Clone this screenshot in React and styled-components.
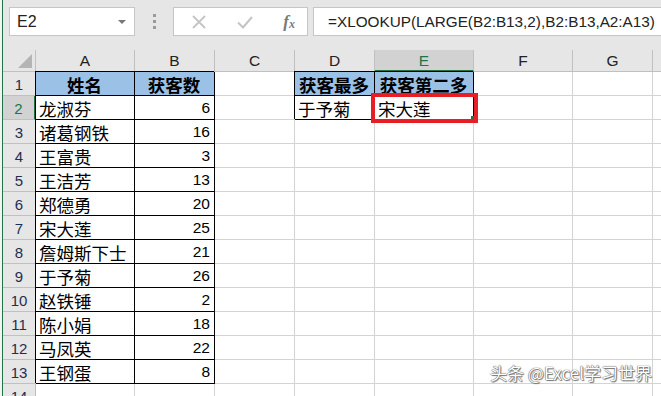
import React from 'react'
import styled, { createGlobalStyle } from 'styled-components'

const GlobalStyle = createGlobalStyle`
  html, body {
    margin: 0;
    padding: 0;
    background: #f3f3f3;
  }
  body {
    font-family: 'Liberation Sans', 'Noto Sans CJK SC', sans-serif;
  }
`

const GREEN = '#217346'
const CJK = "'Noto Sans CJK SC', 'Liberation Sans', sans-serif"

const columns = ['A', 'B', 'C', 'D', 'E', 'F', 'G', 'H']
const widths = [99, 80, 80, 80, 99, 99, 80, 100]

const people = [
  ['龙淑芬', 6],
  ['诸葛钢铁', 16],
  ['王富贵', 3],
  ['王洁芳', 13],
  ['郑德勇', 20],
  ['宋大莲', 25],
  ['詹姆斯下士', 21],
  ['于予菊', 26],
  ['赵铁锤', 2],
  ['陈小娟', 18],
  ['马凤英', 22],
  ['王钢蛋', 8],
]

function buildRows() {
  const rows = []
  rows.push([
    { text: '姓名', head: true },
    { text: '获客数', head: true },
    {},
    { text: '获客最多', head: true },
    { text: '获客第二多', head: true },
    {}, {}, {},
  ])
  people.forEach(([name, n], i) => {
    rows.push([
      { text: name, boxed: true },
      { text: n, boxed: true, num: true },
      {},
      i === 0 ? { text: '于予菊', boxed: true } : {},
      i === 0 ? { text: '宋大莲', boxed: true } : {},
      {}, {}, {},
    ])
  })
  rows.push(columns.map(() => ({})))
  return rows
}

export default function App() {
  const rows = buildRows()
  return (
    <>
      <GlobalStyle />
      <Window>
        <FormulaBar>
          <NameBox>
            <span>E2</span>
            <DropArrow />
          </NameBox>
          <Grip>
            <i />
            <i />
            <i />
          </Grip>
          <FxButtons>
            <svg width='16' height='16' viewBox='0 0 16 16'>
              <path d='M2 2 L14 14 M14 2 L2 14' stroke='#c4c4c4' strokeWidth='1.8' fill='none' />
            </svg>
            <svg width='18' height='16' viewBox='0 0 18 16'>
              <path d='M2 8.5 L7 13.5 L16 3' stroke='#c4c4c4' strokeWidth='2' fill='none' />
            </svg>
            <FxLabel>
              f<sub>x</sub>
            </FxLabel>
          </FxButtons>
          <FormulaInput>=XLOOKUP(LARGE(B2:B13,2),B2:B13,A2:A13)</FormulaInput>
        </FormulaBar>

        <Sheet>
          <Corner>
            <svg width='14' height='14' viewBox='0 0 14 14'>
              <path d='M14 0 L14 14 L0 14 Z' fill='#b4b4b4' />
            </svg>
          </Corner>
          {columns.map((c) => (
            <ColHead key={c} $active={c === 'E'}>
              {c}
            </ColHead>
          ))}
          {rows.map((row, r) => (
            <React.Fragment key={r}>
              <RowHead $active={r === 1}>{r + 1}</RowHead>
              {row.map((cell, c) => (
                <Cell
                  key={c}
                  $boxed={cell.boxed || cell.head}
                  $head={cell.head}
                  $num={cell.num}
                >
                  {cell.text}
                </Cell>
              ))}
            </React.Fragment>
          ))}
        </Sheet>

        <ActiveMark>
          <FillHandle />
        </ActiveMark>
        <Watermark>头条 @Excel学习世界</Watermark>
      </Window>
    </>
  )
}

const Window = styled.div`
  position: relative;
  width: 658px;
  height: 396px;
  margin-left: 2px;
  border-left: 1px solid ${GREEN};
  overflow: hidden;
  background: #fff;
`

const FormulaBar = styled.div`
  display: flex;
  align-items: flex-start;
  height: 50px;
  box-sizing: border-box;
  padding: 7px 0 0 6px;
  background: #e6e6e6;
`

const NameBox = styled.div`
  display: flex;
  align-items: center;
  justify-content: space-between;
  width: 126px;
  height: 29px;
  box-sizing: border-box;
  padding: 0 8px 0 7px;
  background: #fff;
  border: 1px solid #c6c6c6;
  font-size: 16px;
  color: #222;
`

const DropArrow = styled.span`
  width: 0;
  height: 0;
  border-left: 4px solid transparent;
  border-right: 4px solid transparent;
  border-top: 4px solid #777;
`

const Grip = styled.div`
  display: flex;
  flex-direction: column;
  align-items: center;
  gap: 3px;
  width: 38px;
  padding-top: 7px;
  i {
    width: 3px;
    height: 3px;
    background: #9a9a9a;
  }
`

const FxButtons = styled.div`
  display: flex;
  align-items: center;
  justify-content: space-between;
  width: 135px;
  height: 29px;
  box-sizing: border-box;
  padding: 0 12px 0 17px;
  background: #fff;
  border: 1px solid #c6c6c6;
`

const FxLabel = styled.span`
  font-family: 'Liberation Serif', serif;
  font-style: italic;
  font-weight: bold;
  font-size: 17px;
  color: #7a7a7a;
  sub {
    font-size: 12px;
    vertical-align: -1px;
  }
`

const FormulaInput = styled.div`
  flex: 1;
  height: 29px;
  margin: 0 -10px 0 5px;
  box-sizing: border-box;
  padding: 0 0 0 14px;
  display: flex;
  align-items: center;
  background: #fff;
  border: 1px solid #c6c6c6;
  font-size: 15.3px;
  color: #222;
  white-space: nowrap;
`

const Sheet = styled.div`
  display: grid;
  grid-template-columns: 33px ${widths.map((w) => w + 'px').join(' ')};
  grid-template-rows: 22px;
  grid-auto-rows: 24px;
  width: max-content;
`

const Corner = styled.div`
  display: flex;
  align-items: flex-end;
  justify-content: flex-end;
  padding: 0 3px 3px 0;
  background: #e6e6e6;
  border-right: 1px solid #c0c0c0;
  border-bottom: 1px solid #c0c0c0;
`

const ColHead = styled.div`
  display: flex;
  align-items: center;
  justify-content: center;
  box-sizing: border-box;
  background: ${(p) => (p.$active ? '#d2d2d2' : '#e6e6e6')};
  border-right: 1px solid #c0c0c0;
  border-bottom: ${(p) => (p.$active ? `2px solid ${GREEN}` : '1px solid #c0c0c0')};
  color: ${(p) => (p.$active ? GREEN : '#222')};
  font-size: 15.5px;
  padding-top: ${(p) => (p.$active ? '1px' : '0')};
`

const RowHead = styled.div`
  display: flex;
  align-items: center;
  justify-content: center;
  box-sizing: border-box;
  background: ${(p) => (p.$active ? '#d2d2d2' : '#e6e6e6')};
  border-right: ${(p) => (p.$active ? `2px solid ${GREEN}` : '1px solid #c0c0c0')};
  border-bottom: 1px solid #c0c0c0;
  color: ${(p) => (p.$active ? GREEN : '#1f2f4f')};
  font-size: 15px;
  padding-top: 1px;
`

const Cell = styled.div`
  display: flex;
  align-items: center;
  justify-content: ${(p) => (p.$head ? 'center' : p.$num ? 'flex-end' : 'flex-start')};
  box-sizing: border-box;
  padding: 1px 4px 0 3px;
  background: ${(p) => (p.$head ? '#9bc2e6' : '#fff')};
  border-right: 1px solid ${(p) => (p.$boxed ? '#000' : '#d4d4d4')};
  border-bottom: 1px solid ${(p) => (p.$boxed ? '#000' : '#d4d4d4')};
  box-shadow: ${(p) => (p.$boxed ? '-1px -1px 0 #000' : 'none')};
  font-family: ${(p) => (p.$num ? "'Liberation Sans', sans-serif" : CJK)};
  font-size: ${(p) => (p.$num ? '15.5px' : '17.5px')};
  font-weight: ${(p) => (p.$head ? 700 : 400)};
  color: #000;
  white-space: nowrap;
  overflow: visible;
`

const ActiveMark = styled.div`
  position: absolute;
  left: 368px;
  top: 93px;
  width: 107px;
  height: 30px;
  box-sizing: border-box;
  border: 4px solid #e81e26;
`

const FillHandle = styled.div`
  position: absolute;
  right: 0;
  bottom: 0;
  width: 3px;
  height: 3px;
  background: ${GREEN};
`

const Watermark = styled.div`
  position: absolute;
  right: 9px;
  bottom: 11px;
  font-family: 'Noto Sans CJK SC', 'Liberation Sans', sans-serif;
  font-size: 17px;
  color: #fff;
  text-shadow: 0 0 1px #555, 0 0 1px #555, 1px 1px 1px #777;
  white-space: nowrap;
`
